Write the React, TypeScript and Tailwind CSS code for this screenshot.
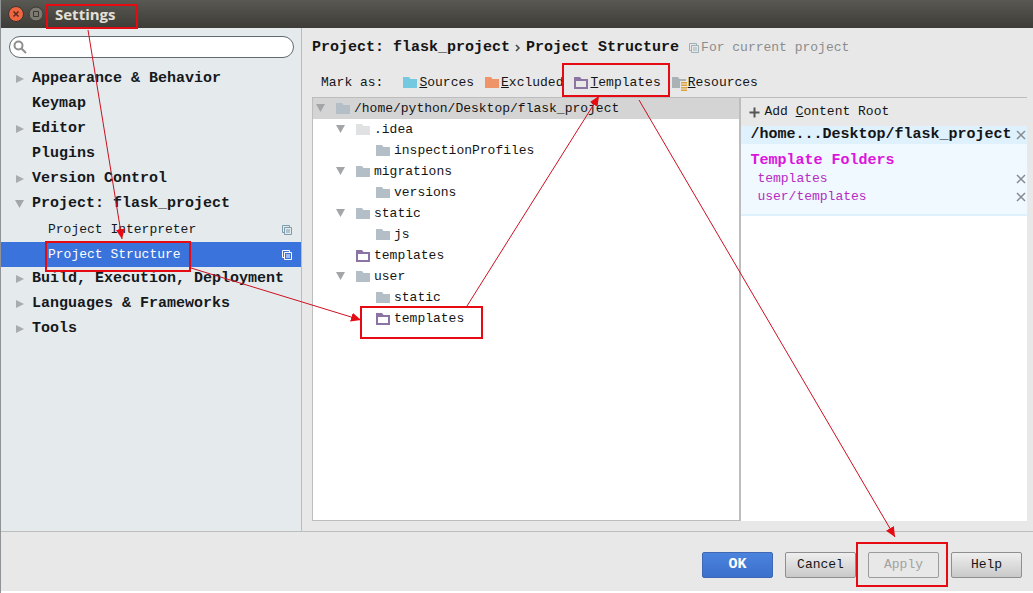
import clsx from "clsx";
import { useState } from "react";

type FolderKind = "plain" | "light" | "source" | "excluded" | "template" | "resource";

const settingsItems = [
  { label: "Appearance & Behavior", arrow: "right" },
  { label: "Keymap" },
  { label: "Editor", arrow: "right" },
  { label: "Plugins" },
  { label: "Version Control", arrow: "right" },
  { label: "Project: flask_project", arrow: "down" },
  { label: "Project Interpreter", child: true },
  { label: "Project Structure", child: true },
  { label: "Build, Execution, Deployment", arrow: "right" },
  { label: "Languages & Frameworks", arrow: "right" },
  { label: "Tools", arrow: "right" },
];

const treeIndent = ["pl-[3px]", "pl-[23px]", "pl-[43px]"];

const treeItems: { name: string; depth: number; open?: boolean; kind: FolderKind }[] = [
  { name: "/home/python/Desktop/flask_project", depth: 0, open: true, kind: "plain" },
  { name: ".idea", depth: 1, open: true, kind: "light" },
  { name: "inspectionProfiles", depth: 2, kind: "plain" },
  { name: "migrations", depth: 1, open: true, kind: "plain" },
  { name: "versions", depth: 2, kind: "plain" },
  { name: "static", depth: 1, open: true, kind: "plain" },
  { name: "js", depth: 2, kind: "plain" },
  { name: "templates", depth: 1, kind: "template" },
  { name: "user", depth: 1, open: true, kind: "plain" },
  { name: "static", depth: 2, kind: "plain" },
  { name: "templates", depth: 2, kind: "template" },
];

const marks: { label: string; kind: FolderKind }[] = [
  { label: "Sources", kind: "source" },
  { label: "Excluded", kind: "excluded" },
  { label: "Templates", kind: "template" },
  { label: "Resources", kind: "resource" },
];

const folderColors: Record<FolderKind, string> = {
  plain: "#b3bec6",
  light: "#dfe1e2",
  source: "#74c8e0",
  excluded: "#ee9468",
  template: "#8b74a4",
  resource: "#aab2b6",
};

const FolderIcon = ({ kind }: { kind: FolderKind }) => (
  <svg width="14" height="12" viewBox="0 0 14 12" className="shrink-0 overflow-visible" aria-hidden="true">
    {kind === "template" ? (
      <path
        d="M0 0H6L7.5 2H14V12H0ZM2 4V10H12V4Z"
        fill={folderColors[kind]}
        fillRule="evenodd"
      />
    ) : (
      <path d="M0 0H6L7.5 2H14V11H0Z" fill={folderColors[kind]} />
    )}
    {kind === "resource" && (
      <>
        <path d="M8 4H15V14H8Z" fill="#e8e8e8" />
        <path d="M9 5H15V6.5H9ZM9 7.5H15V9H9ZM9 10H15V11.5H9ZM9 12.5H15V14H9Z" fill="#dfa23c" />
      </>
    )}
  </svg>
);

const Arrow = ({ direction }: { direction?: string }) => (
  <svg width="10" height="10" viewBox="0 0 10 10" className="shrink-0" aria-hidden="true">
    {direction === "right" && <path d="M1 0L9 4L1 8Z" fill="#a9acae" />}
    {direction === "down" && <path d="M0 0H9L4.5 8Z" fill="#a3a6a8" />}
  </svg>
);

const CopyIcon = () => (
  <svg width="10" height="10" viewBox="0 0 10 10" className="shrink-0" fill="none" stroke="currentColor" aria-hidden="true">
    <path d="M2.5 7.5H0.5V0.5H7.5V2.5" />
    <path d="M2.5 2.5H9.5V9.5H2.5ZM4 5H8M4 7H8" />
  </svg>
);

const RemoveButton = ({ label }: { label: string }) => (
  <button aria-label={label} className="shrink-0 text-[#858b90]">
    <svg width="10" height="10" viewBox="0 0 10 10" stroke="currentColor" strokeWidth="1.5" aria-hidden="true">
      <path d="M1 1L9 9M9 1L1 9" />
    </svg>
  </button>
);

const TitleBar = () => (
  <header className="flex h-7 items-center gap-1 bg-linear-to-b from-[#5a5852] to-[#3d3c37] pl-[7px]">
    <button aria-label="Close" className="h-4 w-4">
      <svg width="16" height="16" viewBox="0 0 16 16" aria-hidden="true">
        <circle cx="8" cy="8" r="7.5" fill="#ee6540" stroke="#37342f" />
        <path d="M5.5 5.5L10.5 10.5M10.5 5.5L5.5 10.5" stroke="#5a2b1c" strokeWidth="1.5" />
      </svg>
    </button>
    <button aria-label="Maximize" className="h-4 w-4">
      <svg width="16" height="16" viewBox="0 0 16 16" aria-hidden="true">
        <circle cx="8" cy="8" r="7" fill="#7d7a72" stroke="#3a3833" />
        <path d="M5.5 5.5H10.5V10.5H5.5Z" fill="none" stroke="#3a3833" />
      </svg>
    </button>
    <h1 className="pl-[7px] font-['Open_Sans',sans-serif] text-[15px] font-bold text-[#e4e0d8]">Settings</h1>
  </header>
);

const Sidebar = () => {
  const [selected, setSelected] = useState("Project Structure");

  return (
    <nav className="w-[301px] shrink-0 border-r border-[#b5bcc2] bg-[#e5eaed] pt-2">
      <div className="relative ml-2 mr-[7px]">
        <input
          type="text"
          aria-label="Search settings"
          className="block h-[22px] w-full rounded-full border border-[#5f6b70] bg-white pl-6 pr-3 outline-none"
        />
        <svg
          width="14"
          height="14"
          viewBox="0 0 14 14"
          className="pointer-events-none absolute left-1 top-1"
          fill="none"
          stroke="#8e8e8e"
          strokeWidth="2"
          aria-hidden="true"
        >
          <circle cx="5.5" cy="5.5" r="4" />
          <path d="M8.5 8.5L13 13" />
        </svg>
      </div>
      <ul className="mt-[9px]">
        {settingsItems.map((item) => (
          <li key={item.label}>
            <button
              onClick={() => setSelected(item.label)}
              className={clsx(
                "flex h-[25px] w-full items-center whitespace-nowrap pr-[9px] text-left",
                item.child ? "pl-[47px]" : "gap-[7px] pl-[14px] text-[15px] font-bold",
                selected === item.label ? "bg-[#3a73dc] text-white" : "text-[#15191c]"
              )}
            >
              {!item.child && <Arrow direction={item.arrow} />}
              <span className="flex-1">{item.label}</span>
              {item.child && (
                <span className={selected === item.label ? "text-white" : "text-[#7e9cab]"}>
                  <CopyIcon />
                </span>
              )}
            </button>
          </li>
        ))}
      </ul>
    </nav>
  );
};

const FolderTree = () => (
  <ul className="flex-3 border-r-2 border-[#bdbdbd] bg-white">
    {treeItems.map((item, index) => (
      <li
        key={index}
        className={clsx(
          "flex h-[21px] items-center gap-[10px] whitespace-nowrap",
          treeIndent[item.depth],
          index === 0 && "bg-[#d4d4d4]"
        )}
      >
        <Arrow direction={item.open ? "down" : undefined} />
        <span className="flex items-center gap-1">
          <FolderIcon kind={item.kind} />
          {item.name}
        </span>
      </li>
    ))}
  </ul>
);

const ContentRoots = () => (
  <section className="flex-2 bg-white">
    <button className="flex h-7 w-full items-center gap-1 bg-[#e8e8e8] pl-2">
      <svg width="11" height="11" viewBox="0 0 11 11" stroke="#555" strokeWidth="2" aria-hidden="true">
        <path d="M5.5 0.5V10.5M0.5 5.5H10.5" />
      </svg>
      <span>
        Add <u>C</u>ontent Root
      </span>
    </button>
    <div className="flex h-[18px] items-center justify-between bg-[#dff1fd] pl-[9px] pr-[1px]">
      <h3 className="whitespace-nowrap text-[15px] font-bold">/home...Desktop/flask_project</h3>
      <RemoveButton label="Remove content root" />
    </div>
    <div className="border-b-2 border-[#dff1fd] bg-[#f0f9ff] pb-2 pl-[9px] pr-[1px] pt-2 leading-[18px]">
      <h4 className="text-[15px] font-bold text-[#dc14dc]">Template Folders</h4>
      <ul className="text-[#b52bc4]">
        {["templates", "user/templates"].map((folder) => (
          <li key={folder} className="flex items-center justify-between pl-[7px]">
            {folder}
            <RemoveButton label={`Remove ${folder}`} />
          </li>
        ))}
      </ul>
    </div>
  </section>
);

const ProjectStructure = () => (
  <main className="flex min-w-0 flex-1 flex-col pb-[10px] pl-[10px] pr-[6px]">
    <div className="flex h-10 items-center whitespace-nowrap">
      <h2 className="text-[15px] font-bold">Project: flask_project</h2>
      <svg width="8" height="10" viewBox="0 0 8 10" className="mx-1" fill="none" stroke="#444" strokeWidth="1.5" aria-hidden="true">
        <path d="M2 2L5 5L2 8" />
      </svg>
      <h2 className="text-[15px] font-bold">Project Structure</h2>
      <p className="flex items-center gap-[2px] pl-[10px] text-[#8c8c8c]">
        <span className="text-[#9eb0b6]">
          <CopyIcon />
        </span>
        For current project
      </p>
    </div>
    <div className="flex h-[29px] items-center whitespace-nowrap pl-[9px]">
      <span className="mr-5">Mark as:</span>
      <div className="flex gap-[11px]">
        {marks.map((mark) => (
          <button key={mark.label} className="flex items-center gap-[2px]">
            <FolderIcon kind={mark.kind} />
            <span>
              <u>{mark.label[0]}</u>
              {mark.label.slice(1)}
            </span>
          </button>
        ))}
      </div>
    </div>
    <div className="flex flex-1 border-t border-[#bdbdbd]">
      <div className="flex flex-3 border-b border-l border-[#bdbdbd]">
        <FolderTree />
      </div>
      <div className="flex flex-2">
        <ContentRoots />
      </div>
    </div>
  </main>
);

const buttonClass =
  "h-[26px] w-[71px] rounded-xs border border-[#8f8f8f] bg-linear-to-b from-[#efefef] to-[#c9c9c9]";

const Footer = () => (
  <footer className="flex h-[62px] items-start justify-end gap-3 border-b-2 border-t border-b-white border-t-[#bdbdbd] pr-[11px] pt-5">
    <button className="h-[26px] w-[71px] rounded-xs border border-[#3e68b4] bg-linear-to-b from-[#4a83de] to-[#3c70cd] text-[15px] font-bold text-white">
      OK
    </button>
    <button className={buttonClass}>Cancel</button>
    <button disabled className="h-[26px] w-[71px] rounded-xs border border-[#9b9b9b] text-[#a2a2a2]">
      Apply
    </button>
    <button className={buttonClass}>Help</button>
  </footer>
);

// red boxes and arrows that lead through the steps
const Annotations = () => (
  <svg
    width="1033"
    height="593"
    viewBox="0 0 1033 593"
    className="pointer-events-none absolute -left-px top-0"
    fill="none"
    stroke="#e60a12"
    aria-hidden="true"
  >
    <defs>
      <marker id="head" markerWidth="11" markerHeight="10" refX="10" refY="5" orient="auto" markerUnits="userSpaceOnUse">
        <path d="M0 0.5L10 5L0 9.5Z" fill="#e60a12" stroke="none" />
      </marker>
    </defs>
    <g strokeWidth="2">
      <rect x="47" y="5" width="90" height="23" />
      <rect x="46" y="242" width="144" height="29" />
      <rect x="361" y="307" width="121" height="31" />
      <rect x="563" y="64" width="106" height="32" />
      <rect x="857" y="543" width="90" height="43" />
    </g>
    <g stroke="#cc1020">
      <path d="M88 30L122 239" markerEnd="url(#head)" />
      <path d="M191 268L361 320" markerEnd="url(#head)" />
      <path d="M467 306L599 96" markerEnd="url(#head)" />
      <path d="M639 100L895 537" markerEnd="url(#head)" />
    </g>
  </svg>
);

export default function App() {
  return (
    <div className="relative flex min-h-screen flex-col border-l border-[#8f9396] bg-[#e8e8e8] font-['Liberation_Mono',monospace] text-[13px] text-[#151515]">
      <TitleBar />
      <div className="flex flex-1">
        <Sidebar />
        <ProjectStructure />
      </div>
      <Footer />
      <Annotations />
    </div>
  );
}
